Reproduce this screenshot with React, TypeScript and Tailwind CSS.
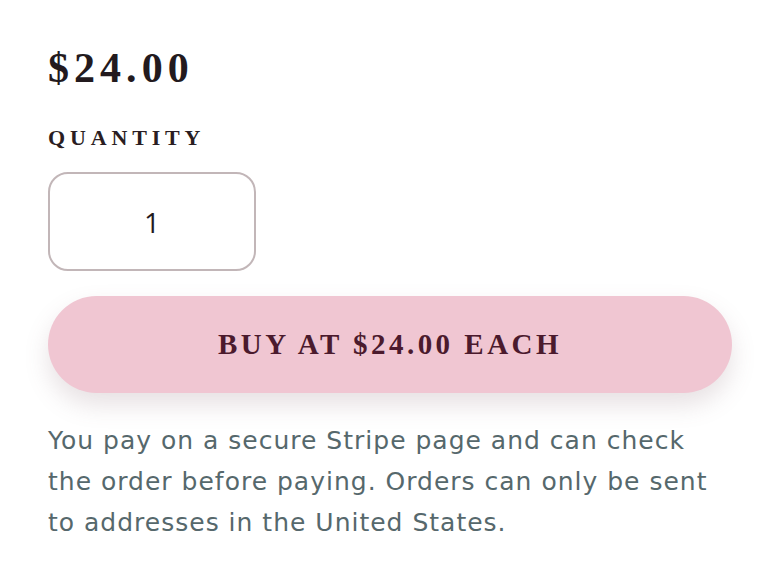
import React, { useState } from 'react';

const App = () => {
  const [qty, setQty] = useState('1');

  return (
    <div className="min-h-[584px] bg-white px-12 pt-[43px]">
      <div className="font-['Liberation_Serif',serif] text-[42px] font-bold leading-[50px] tracking-[0.12em] text-[#231a1e]">
        $24.00
      </div>

      <label className="mt-[32px] block font-['Liberation_Serif',serif] text-[22px] font-bold uppercase leading-[26px] tracking-[0.22em] text-[#2a1d22]">
        Quantity
      </label>

      <input
        value={qty}
        onChange={(e) => setQty(e.target.value)}
        className="mt-[21px] block h-[99px] w-[208px] rounded-[20px] border-2 border-[#c2b6b8] bg-white text-center font-['Open_Sans',sans-serif] text-[28px] text-[#231a1e] outline-none"
      />

      <button className="mt-[25px] flex h-[97px] w-full items-center justify-center rounded-full bg-[#f0c6d2] font-['Liberation_Serif',serif] text-[29px] font-bold uppercase tracking-[0.12em] text-[#4b1a2d] shadow-[0_12px_24px_rgba(120,90,100,0.18)]">
        Buy at $24.00 each
      </button>

      <p className="mt-[27px] font-['DejaVu_Sans',sans-serif] text-[25px] leading-[41px] tracking-[0.04em] text-[#56686c]">
        You pay on a secure Stripe page and can check the order before paying. Orders can only be sent to
        addresses in the United States.
      </p>
    </div>
  );
};

export default App;
